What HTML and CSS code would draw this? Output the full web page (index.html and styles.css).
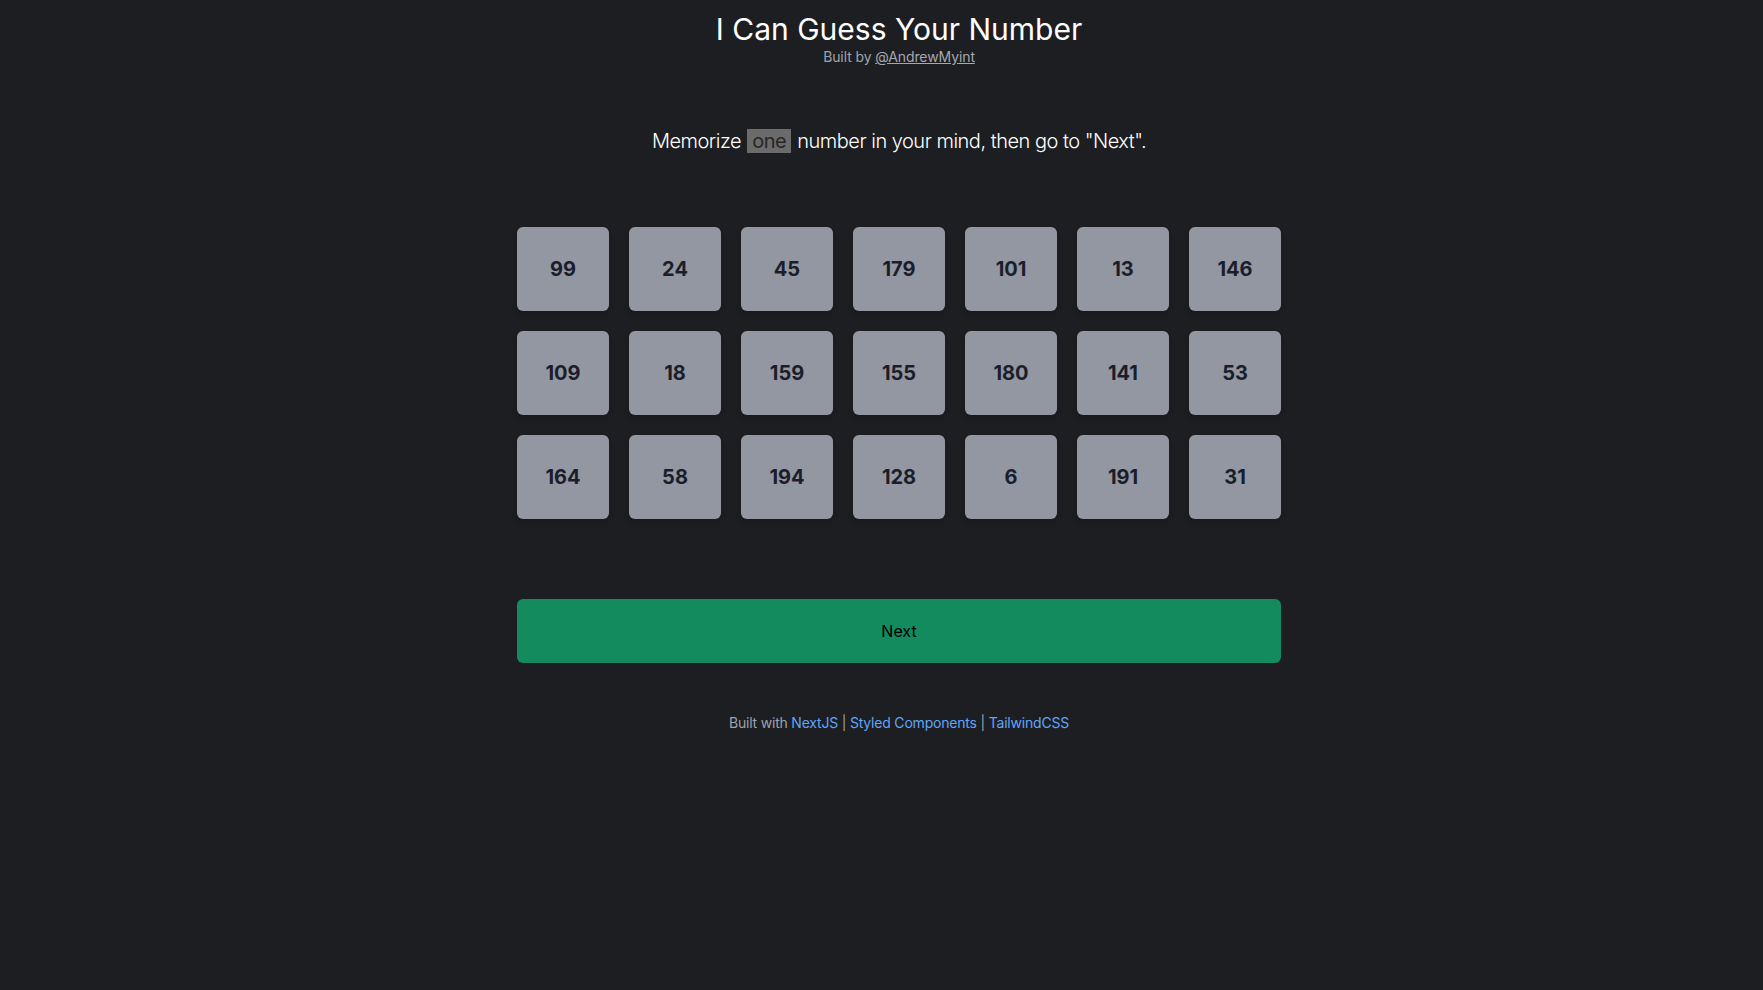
FILE: index.html
```html
<!DOCTYPE html>
<html lang="en">
<head>
<meta charset="utf-8">
<title>I Can Guess Your Number</title>
<link rel="stylesheet" href="styles.css">
</head>
<body>
<div class="page">
  <header class="header">
    <h1 class="title">I Can Guess Your Number</h1>
    <p class="byline">Built by <a class="byline-link" href="#">@AndrewMyint</a></p>
  </header>
  <main class="main">
    <p class="instruction">Memorize <span class="mark">one</span> number in your mind, then go to "Next".</p>
    <div class="grid">
      <div class="card">99</div>
      <div class="card">24</div>
      <div class="card">45</div>
      <div class="card">179</div>
      <div class="card">101</div>
      <div class="card">13</div>
      <div class="card">146</div>
      <div class="card">109</div>
      <div class="card">18</div>
      <div class="card">159</div>
      <div class="card">155</div>
      <div class="card">180</div>
      <div class="card">141</div>
      <div class="card">53</div>
      <div class="card">164</div>
      <div class="card">58</div>
      <div class="card">194</div>
      <div class="card">128</div>
      <div class="card">6</div>
      <div class="card">191</div>
      <div class="card">31</div>
    </div>
    <button class="next" type="button">Next</button>
  </main>
  <footer class="footer">Built with <a class="flink" href="#">NextJS</a> | <a class="flink" href="#">Styled Components</a> | <a class="flink" href="#">TailwindCSS</a></footer>
</div>
</body>
</html>
```

FILE: styles.css
```css
html, body {
  margin: 0;
  padding: 0;
  background: #1d1e21;
  min-height: 100%;
}
body {
  font-family: Inter, "Noto Sans", sans-serif;
  color: #ffffff;
}
.page {
  padding-left: 35px;
  display: flex;
  flex-direction: column;
  align-items: center;
  min-height: 990px;
  box-sizing: border-box;
}
.header {
  padding-top: 11px;
  text-align: center;
}
.title {
  margin: 0;
  font-size: 30px;
  line-height: 36px;
  font-weight: 400;
  color: #ffffff;
}
.byline {
  margin: 0;
  font-size: 14px;
  line-height: 20px;
  letter-spacing: -0.1px;
  color: #9ca3af;
}
.byline-link {
  color: #a3a8b2;
  text-decoration: underline;
}
.main {
  display: flex;
  flex-direction: column;
  align-items: center;
}
.instruction {
  margin: 60px 0 0 0;
  font-size: 20px;
  line-height: 28px;
  font-weight: 300;
  letter-spacing: -0.5px;
  color: #ffffff;
}
.mark {
  background: #6b6b6b;
  color: #262626;
  font-weight: 400;
  padding: 0 5px;
  margin: 0 1px;
}
.grid {
  margin-top: 72px;
  display: grid;
  grid-template-columns: repeat(7, 92px);
  grid-auto-rows: 84px;
  gap: 20px;
}
.card {
  background: #9297a2;
  border-radius: 6px;
  display: flex;
  align-items: center;
  justify-content: center;
  font-size: 20px;
  font-weight: 700;
  color: #1b1e2a;
  box-shadow: 0 4px 6px -1px rgba(0,0,0,0.1), 0 2px 4px -1px rgba(0,0,0,0.06);
}
.next {
  margin-top: 80px;
  width: 764px;
  height: 64px;
  border: none;
  border-radius: 6px;
  background: #138b5f;
  color: #000000;
  font-family: Inter, "Noto Sans", sans-serif;
  font-size: 16px;
  font-weight: 400;
  cursor: pointer;
}
.footer {
  margin-top: 50px;
  font-size: 14px;
  line-height: 20px;
  letter-spacing: -0.2px;
  color: #9ca3af;
}
.flink {
  color: #60a5fa;
  text-decoration: none;
}
```
